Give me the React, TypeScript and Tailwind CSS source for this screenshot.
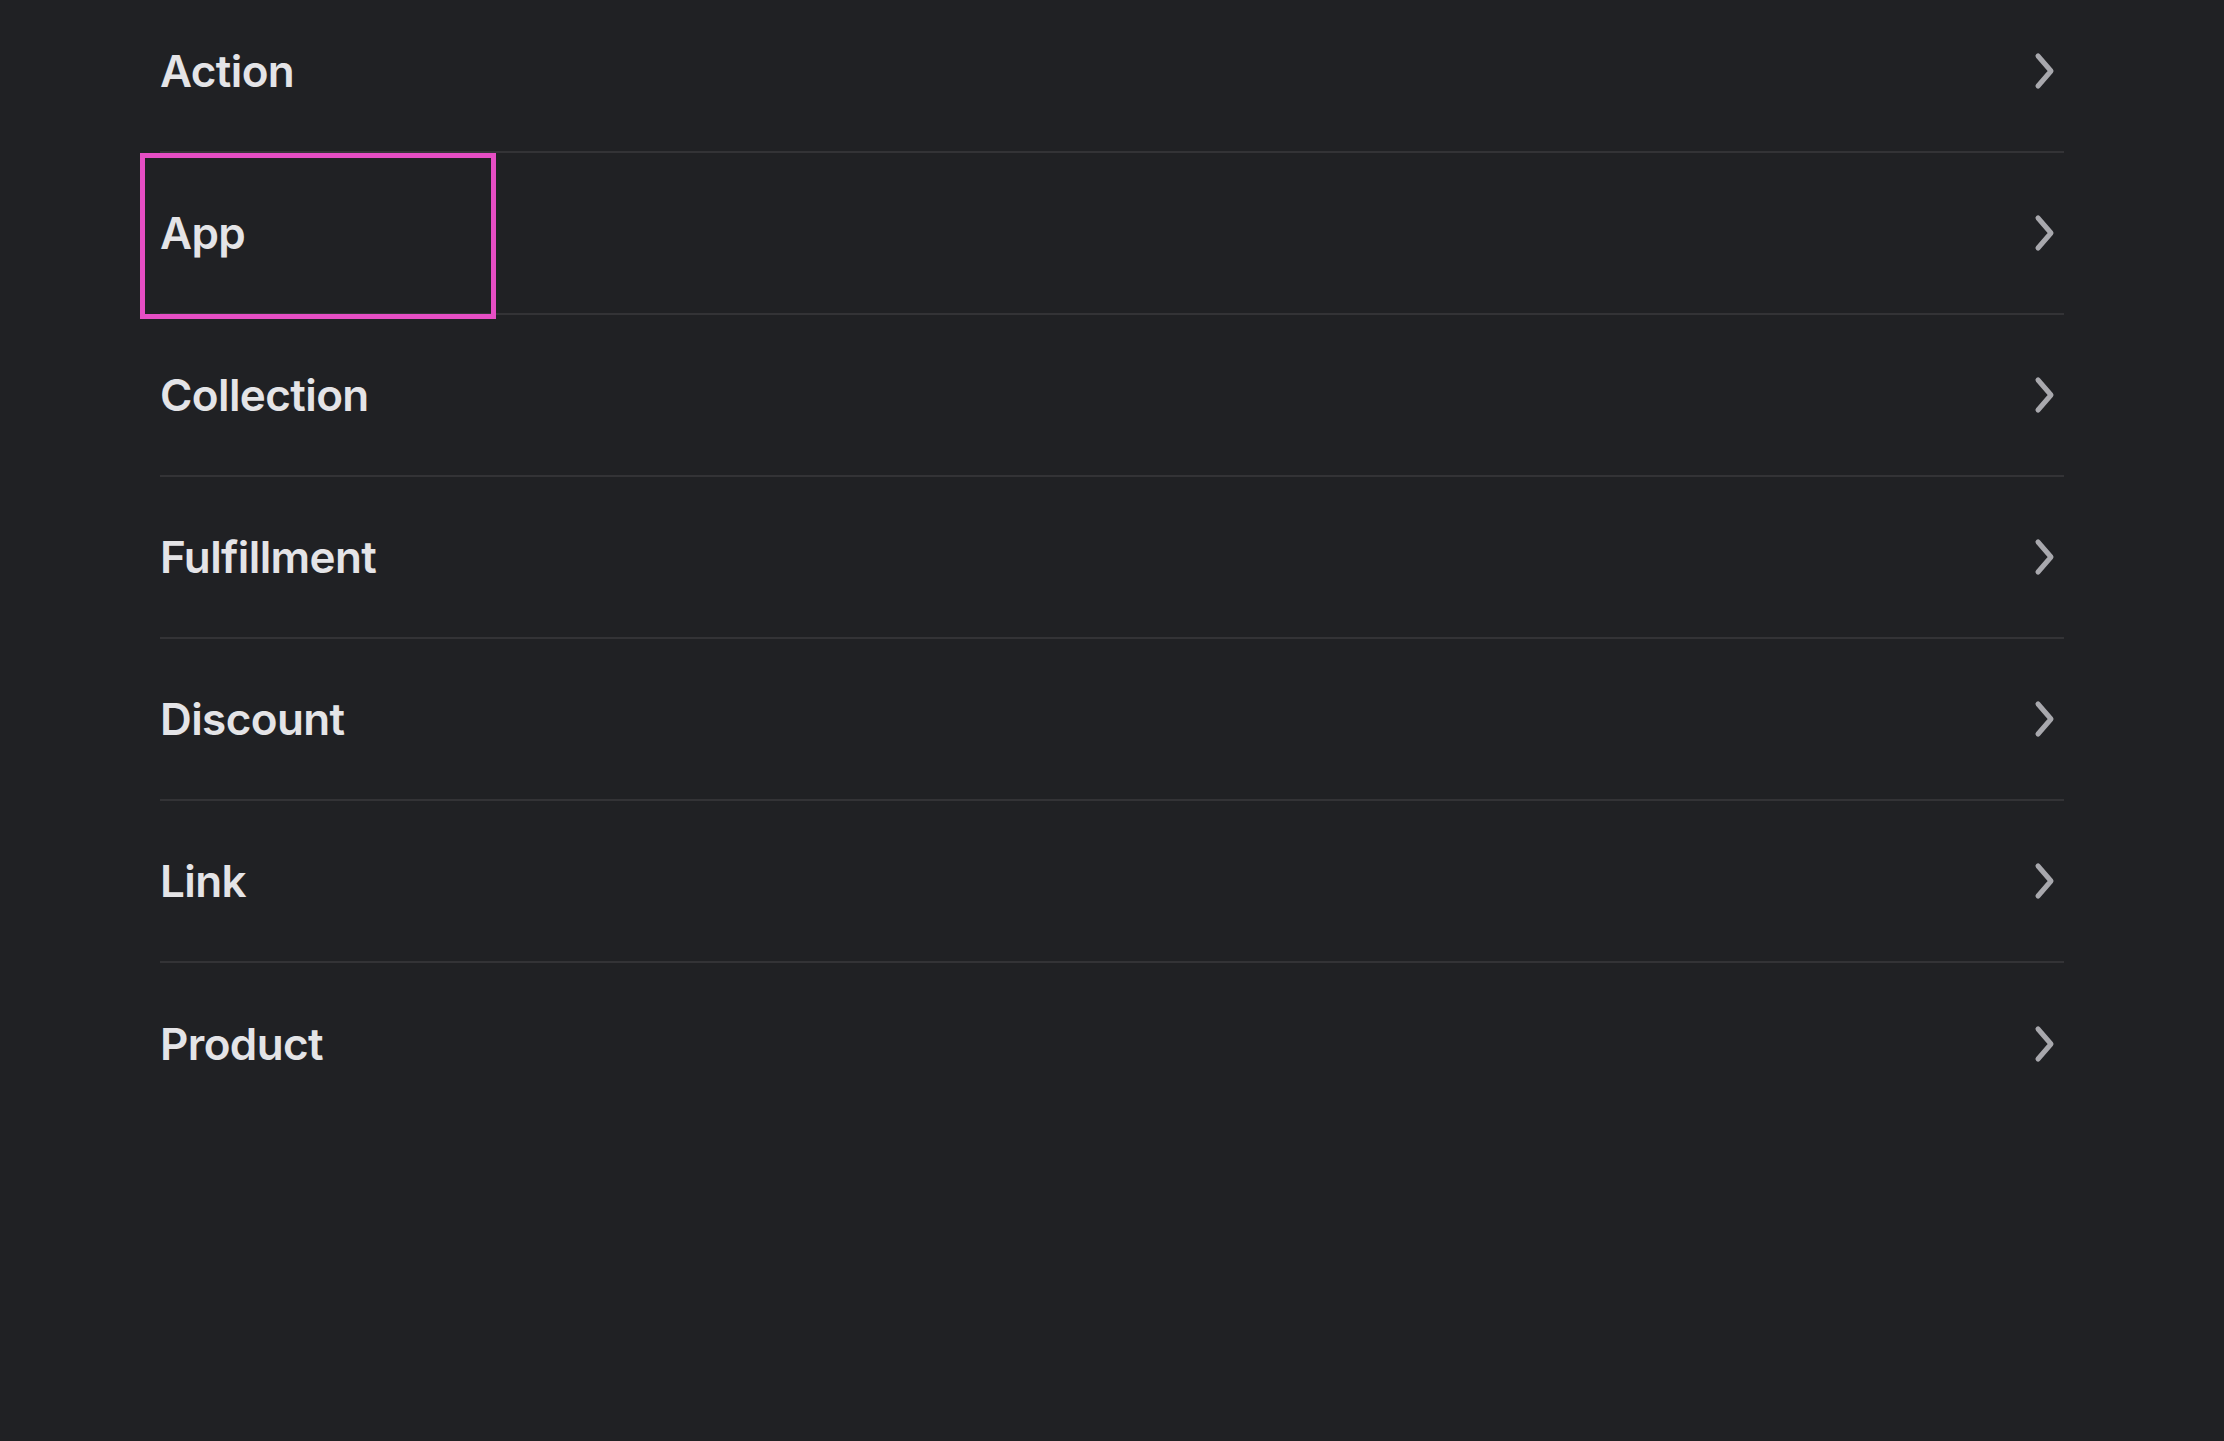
const items = ['Action', 'App', 'Collection', 'Fulfillment', 'Discount', 'Link', 'Product'];

function Chevron() {
  return (
    <svg width="24" height="40" viewBox="0 0 24 40" fill="none" className="mr-[7px] text-[#a8a8ad]">
      <path d="M5 5 L18 20 L5 35" stroke="currentColor" strokeWidth="5" strokeLinecap="round" strokeLinejoin="round" />
    </svg>
  );
}

export default function App() {
  return (
    <div className="min-h-screen w-full bg-[#202124] px-[160px] overflow-hidden" style={{ fontFamily: 'Inter, "Noto Sans", sans-serif' }}>
      <div className="mt-[-9px]">
        {items.map((name, i) => (
          <div
            key={name}
            className={`relative flex h-[162px] items-center justify-between ${
              i < items.length - 1 ? 'border-b-2 border-[#333336]' : ''
            }`}
          >
            <span className="text-[44px] font-semibold tracking-[-0.6px] text-[#e4e4e7]">{name}</span>
            <Chevron />
            {name === 'App' && (
              <div className="pointer-events-none absolute left-[-20px] top-0 h-[166px] w-[356px] border-[5px] border-[#e64ec4]" />
            )}
          </div>
        ))}
      </div>
    </div>
  );
}
